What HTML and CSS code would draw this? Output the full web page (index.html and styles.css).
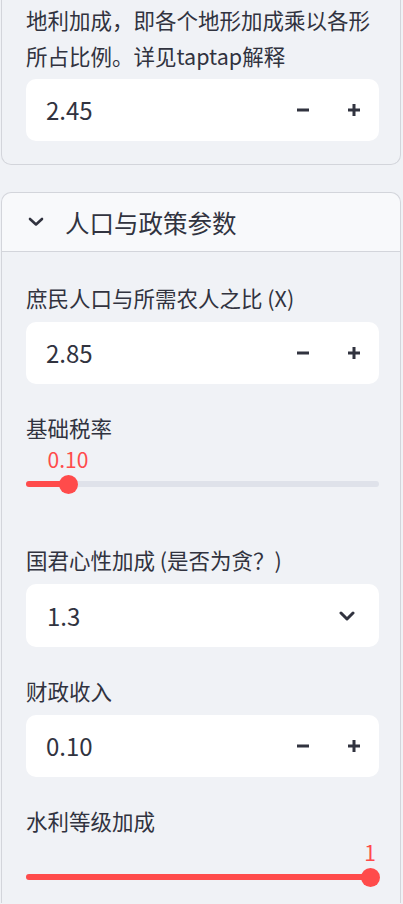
FILE: index.html
```html
<!DOCTYPE html>
<html lang="zh">
<head>
<meta charset="utf-8">
<title>参数</title>
<link rel="stylesheet" href="styles.css">
</head>
<body>
<div class="panel panel-top">
  <div class="help-text">地利加成，即各个地形加成乘以各形所占比例。详见taptap解释</div>
  <div class="numinput">
    <span class="num-val">2.45</span>
    <button class="step" type="button"><svg width="12" height="12" viewBox="0 0 12 12"><rect x="0" y="4.5" width="12" height="3" fill="#31333f"/></svg></button>
    <button class="step" type="button"><svg width="12" height="12" viewBox="0 0 12 12"><rect x="0" y="4.5" width="12" height="3" fill="#31333f"/><rect x="4.5" y="0" width="3" height="12" fill="#31333f"/></svg></button>
  </div>
</div>

<div class="panel expander">
  <div class="exp-header">
    <svg class="exp-chev" width="16" height="10" viewBox="0 0 16 10"><path d="M2 2 L8 7.5 L14 2" fill="none" stroke="#31333f" stroke-width="2.6" stroke-linecap="round" stroke-linejoin="round"/></svg>
    <span class="exp-title">人口与政策参数</span>
  </div>
  <div class="exp-body">
    <div class="field">
      <div class="label">庶民人口与所需农人之比 (X)</div>
      <div class="numinput">
        <span class="num-val">2.85</span>
        <button class="step" type="button"><svg width="12" height="12" viewBox="0 0 12 12"><rect x="0" y="4.5" width="12" height="3" fill="#31333f"/></svg></button>
        <button class="step" type="button"><svg width="12" height="12" viewBox="0 0 12 12"><rect x="0" y="4.5" width="12" height="3" fill="#31333f"/><rect x="4.5" y="0" width="3" height="12" fill="#31333f"/></svg></button>
      </div>
    </div>

    <div class="field">
      <div class="label">基础税率</div>
      <div class="slider">
        <div class="track">
          <div class="fill" style="width:42px"></div>
          <div class="thumb" style="left:42px"><span class="thumb-val">0.10</span></div>
        </div>
      </div>
    </div>

    <div class="field">
      <div class="label">国君心性加成 (是否为贪？)</div>
      <div class="select">
        <span class="num-val">1.3</span>
        <svg width="16" height="10" viewBox="0 0 16 10"><path d="M2 2 L8 8 L14 2" fill="none" stroke="#31333f" stroke-width="3" stroke-linecap="round" stroke-linejoin="round"/></svg>
      </div>
    </div>

    <div class="field">
      <div class="label">财政收入</div>
      <div class="numinput">
        <span class="num-val">0.10</span>
        <button class="step" type="button"><svg width="12" height="12" viewBox="0 0 12 12"><rect x="0" y="4.5" width="12" height="3" fill="#31333f"/></svg></button>
        <button class="step" type="button"><svg width="12" height="12" viewBox="0 0 12 12"><rect x="0" y="4.5" width="12" height="3" fill="#31333f"/><rect x="4.5" y="0" width="3" height="12" fill="#31333f"/></svg></button>
      </div>
    </div>

    <div class="field">
      <div class="label">水利等级加成</div>
      <div class="slider">
        <div class="track">
          <div class="fill" style="width:344px"></div>
          <div class="thumb" style="left:344px"><span class="thumb-val">1</span></div>
        </div>
      </div>
    </div>
  </div>
</div>
</body>
</html>
```

FILE: styles.css
```css
* {
  box-sizing: border-box;
}

html, body {
  margin: 0;
  padding: 0;
  background: #f0f2f6;
}

body {
  font-family: "Noto Sans CJK SC", "Noto Sans", sans-serif;
  color: #31333f;
  width: 403px;
  height: 904px;
  overflow: hidden;
}

.panel {
  margin-left: 1px;
  width: 400px;
  border: 1px solid #d3d5db;
}

.panel-top {
  border-top: none;
  border-radius: 0 0 10px 10px;
  padding: 2px 21px 23px 24px;
}

.help-text {
  font-size: 21.5px;
  line-height: 36px;
  margin-bottom: 5px;
}

.numinput,
.select {
  display: flex;
  align-items: center;
  width: 353px;
  height: 62px;
  background: #ffffff;
  border-radius: 10px;
}

.select {
  height: 63px;
}

.num-val {
  flex: 1;
  padding-left: 20px;
  font-size: 24px;
  line-height: 30px;
  color: #31333f;
}

.select .num-val {
  padding-left: 21px;
}

.select svg {
  margin-right: 24px;
}

.step {
  width: 50px;
  height: 100%;
  border: none;
  background: transparent;
  padding: 0;
  display: flex;
  align-items: center;
  justify-content: center;
}

.step:first-of-type {
  padding-right: 3px;
}

.expander {
  margin-top: 27px;
  border-bottom: none;
  border-radius: 10px 10px 0 0;
  height: 711px;
  overflow: hidden;
}

.exp-header {
  display: flex;
  align-items: center;
  height: 59px;
  background: #f8f9fb;
  border-bottom: 1px solid #d3d5db;
  border-radius: 10px 10px 0 0;
  padding-left: 26px;
}

.exp-chev {
  margin-right: 21px;
}

.exp-title {
  font-size: 24.5px;
  line-height: 32px;
  margin-top: 2px;
}

.exp-body {
  display: flex;
  flex-direction: column;
  gap: 28px;
  padding: 30px 21px 0 24px;
}

.field {
  display: flex;
  flex-direction: column;
}

.label {
  font-size: 21.5px;
  line-height: 32px;
  margin-bottom: 8px;
  white-space: nowrap;
}

.field .slider {
  margin-top: -8px;
  height: 72px;
  width: 353px;
  padding-top: 37px;
}

.track {
  position: relative;
  height: 6px;
  border-radius: 3px;
  background: #dfe2ea;
}

.fill {
  height: 100%;
  border-radius: 3px;
  background: #ff4b4b;
}

.thumb {
  position: absolute;
  top: 50%;
  width: 19px;
  height: 19px;
  margin-left: -9.5px;
  margin-top: -9.5px;
  border-radius: 50%;
  background: #ff4b4b;
}

.thumb-val {
  position: absolute;
  bottom: calc(100% + 4px);
  left: 50%;
  transform: translateX(-50%);
  font-size: 21px;
  line-height: 24px;
  color: #ff4b4b;
  white-space: nowrap;
}
```
